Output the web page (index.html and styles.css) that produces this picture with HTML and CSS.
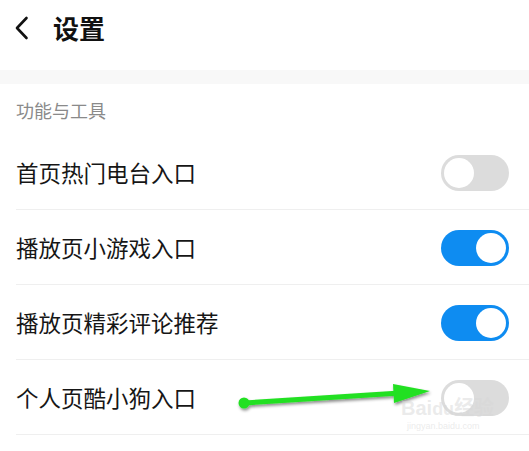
FILE: index.html
```html
<!DOCTYPE html>
<html lang="zh-CN">
<head>
<meta charset="utf-8">
<link rel="stylesheet" href="styles.css">
</head>
<body>
<div class="page">
  <header class="topbar">
    <svg class="back" width="16" height="24" viewBox="0 0 16 24"><path d="M12.5 2 L3 12 L12.5 22" fill="none" stroke="#111" stroke-width="2.6" stroke-linecap="round" stroke-linejoin="round"/></svg>
    <h1 class="title">设置</h1>
  </header>
  <div class="band"></div>
  <div class="section">功能与工具</div>
  <ul class="list">
    <li class="row"><span class="label">首页热门电台入口</span><span class="toggle"><span class="knob"></span></span></li>
    <li class="row"><span class="label">播放页小游戏入口</span><span class="toggle on"><span class="knob"></span></span></li>
    <li class="row"><span class="label">播放页精彩评论推荐</span><span class="toggle on"><span class="knob"></span></span></li>
    <li class="row"><span class="label">个人页酷小狗入口</span><span class="toggle"><span class="knob"></span></span></li>
  </ul>
  <svg class="arrow" width="529" height="451" viewBox="0 0 529 451">
    <defs>
      <filter id="sh" x="-10%" y="-50%" width="120%" height="200%">
        <feDropShadow dx="1" dy="2" stdDeviation="1.5" flood-color="#000" flood-opacity="0.45"/>
      </filter>
    </defs>
    <g filter="url(#sh)" fill="#22e022">
      <line x1="244" y1="403" x2="400" y2="393" stroke="#22e022" stroke-width="5"/>
      <circle cx="244" cy="403" r="5.5"/>
      <polygon points="393,384 430,391 394,403"/>
    </g>
  </svg>
  <div class="watermark"><span class="wm-big">Bai<span class="wm-du">du</span>经验</span><span class="wm-small">jingyan.baidu.com</span></div>
</div>
</body>
</html>
```
FILE: styles.css
```css
html, body {
  margin: 0;
  padding: 0;
  background: #fff;
}
body {
  font-family: "Noto Sans CJK SC", "Noto Sans", sans-serif;
  color: #1a1a1a;
}
.page {
  position: relative;
  width: 529px;
  height: 451px;
  overflow: hidden;
}
.topbar {
  height: 56px;
  display: flex;
  align-items: center;
  padding-left: 14px;
  margin-bottom: 14px;
}
.back {
  display: block;
}
.title {
  margin: 0 0 0 23px;
  font-size: 26px;
  font-weight: 700;
  line-height: 1;
  color: #111;
}
.band {
  height: 14px;
  background: #f8f8f8;
}
.section {
  height: 51px;
  display: flex;
  align-items: center;
  padding-left: 16px;
  font-size: 18px;
  color: #8a8a8a;
}
.list {
  list-style: none;
  margin: 0;
  padding: 0;
}
.row {
  height: 74px;
  margin-left: 16px;
  padding-right: 20px;
  border-bottom: 1px solid #efefef;
  display: flex;
  align-items: center;
  justify-content: space-between;
}
.label {
  font-size: 22.5px;
  line-height: 1;
  color: #161616;
}
.toggle {
  position: relative;
  width: 68px;
  height: 36px;
  border-radius: 18px;
  background: #dcdcdc;
  box-sizing: border-box;
  display: flex;
  align-items: center;
  padding: 0 3px;
  margin-top: 2px;
}
.toggle .knob {
  width: 30px;
  height: 30px;
  border-radius: 50%;
  background: #fff;
}
.toggle.on {
  background: #0e8cf1;
  justify-content: flex-end;
}
.arrow {
  position: absolute;
  left: 0;
  top: 0;
}
.watermark {
  position: absolute;
  left: 401px;
  top: 396px;
  display: flex;
  flex-direction: column;
  align-items: flex-start;
  color: rgba(215, 215, 215, 0.5);
  font-family: "Liberation Sans", "Noto Sans CJK SC", sans-serif;
  pointer-events: none;
}
.wm-big {
  font-size: 20px;
  line-height: 24px;
  font-weight: 700;
}
.wm-du {
  font-size: 18px;
}
.wm-small {
  font-size: 9px;
  line-height: 11px;
  margin-left: 6px;
}
```
